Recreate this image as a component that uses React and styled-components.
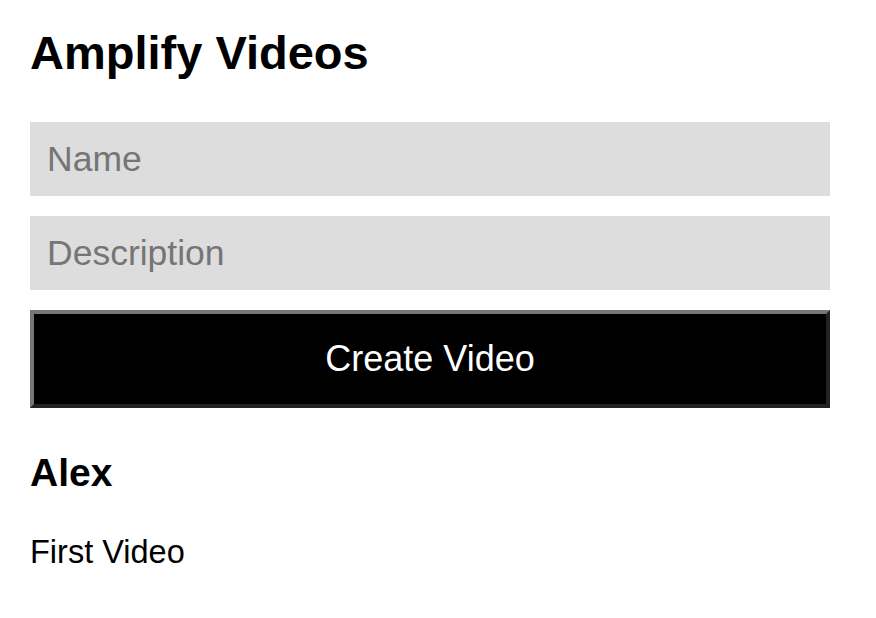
import React from "react";
import styled, { createGlobalStyle } from "styled-components";

const Global = createGlobalStyle`
  html, body { margin: 0; padding: 0; background: #fff; }
  body { font-family: "Liberation Sans", Arial, sans-serif; color: #000; }
`;

const Container = styled.div`
  width: 800px;
  padding: 27px 30px 0;
  display: flex;
  flex-direction: column;
`;

const Title = styled.h2`
  margin: 0 0 43px;
  font-size: 47px;
  line-height: 52px;
  font-weight: 700;
`;

const Input = styled.input`
  box-sizing: border-box;
  width: 800px;
  height: 74px;
  margin: 0 0 20px;
  padding: 0 17px;
  border: none;
  outline: none;
  background: #dddddd;
  font-family: "Liberation Sans", Arial, sans-serif;
  font-size: 35.5px;
  color: #000;
  &::placeholder { color: #757575; }
`;

const Button = styled.button`
  box-sizing: border-box;
  width: 800px;
  height: 98px;
  margin: 0 0 43px;
  background: #000;
  color: #fff;
  border-width: 4px;
  border-style: solid;
  border-color: #767676 #222 #222 #767676;
  font-family: "Liberation Sans", Arial, sans-serif;
  font-size: 36px;
  padding: 0;
`;

const VideoName = styled.p`
  margin: 0 0 39px;
  font-size: 39px;
  line-height: 44px;
  font-weight: 700;
`;

const VideoDesc = styled.p`
  margin: 0;
  font-size: 32.5px;
  line-height: 36px;
`;

export default function App() {
  return (
    <>
      <Global />
      <Container>
        <Title>Amplify Videos</Title>
        <Input placeholder="Name" />
        <Input placeholder="Description" />
        <Button>Create Video</Button>
        <div>
          <VideoName>Alex</VideoName>
          <VideoDesc>First Video</VideoDesc>
        </div>
      </Container>
    </>
  );
}
